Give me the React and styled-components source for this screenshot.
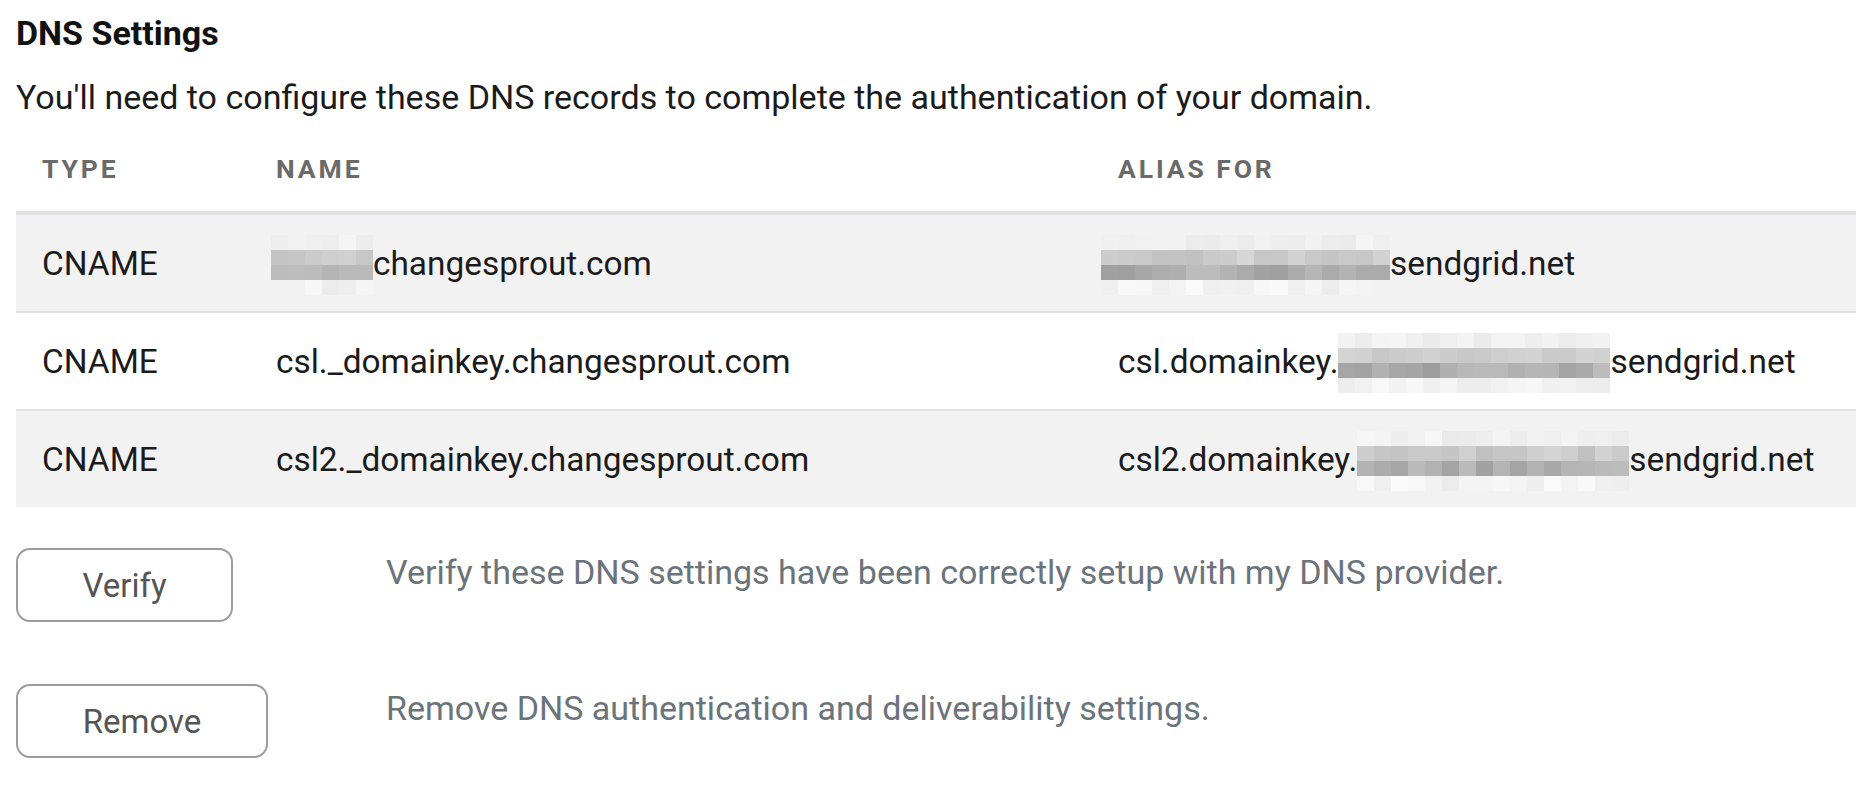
import React from "react";
import styled, { createGlobalStyle } from "styled-components";

const GlobalStyle = createGlobalStyle`
  body {
    margin: 0;
    background: #fff;
    font-family: Roboto, "Liberation Sans", sans-serif;
    color: #1b1b1b;
  }
`;

const Page = styled.div`
  padding: 13px 0 0 16px;
`;

const Title = styled.h2`
  margin: 0;
  font-size: 34px;
  font-weight: 700;
  line-height: 40px;
  color: #111;
`;

const Intro = styled.p`
  margin: 24px 0 0;
  font-size: 34px;
  line-height: 40px;
  color: #1b1b1b;
`;

const cols = `234px 842px 1fr`;

const Table = styled.div`
  margin-top: 0;
`;

const HeadRow = styled.div`
  display: grid;
  grid-template-columns: ${cols};
  align-items: center;
  height: 98px;
  padding-top: 8px;
  box-sizing: border-box;
  border-bottom: 4px solid #dfe0e4;
`;

const HeadCell = styled.div`
  padding-left: 26px;
  font-size: 26.5px;
  font-weight: 700;
  letter-spacing: 2.9px;
  color: #6a6a6a;
  text-transform: uppercase;
`;

const Row = styled.div`
  display: grid;
  grid-template-columns: ${cols};
  align-items: center;
  height: 96px;
  background: ${(p) => (p.$shaded ? "#f2f2f2" : "#fff")};
  & + & {
    border-top: 2px solid #e1e2e4;
  }
`;

const Cell = styled.div`
  padding-left: 26px;
  font-size: 33.4px;
  white-space: nowrap;
  display: flex;
  align-items: center;
`;

const Mosaic = styled.span`
  display: inline-grid;
  grid-auto-flow: column;
  grid-template-rows: repeat(4, 15px);
  margin-top: 4px;
  margin-left: ${(p) => p.$shift || 0}px;
`;

const Tile = styled.span`
  width: 17px;
`;

const Actions = styled.div`
  margin-top: 41px;
  display: flex;
  flex-direction: column;
  gap: 62px;
`;

const ActionRow = styled.div`
  display: grid;
  grid-template-columns: 370px 1fr;
  align-items: start;
`;

const Button = styled.button`
  width: ${(p) => p.$width}px;
  height: 74px;
  border: 2px solid #9c9c9c;
  border-radius: 14px;
  background: #fff;
  font-family: inherit;
  font-size: 33px;
  color: #555;
  cursor: pointer;
`;

const Desc = styled.div`
  padding-top: 4px;
  font-size: 34px;
  line-height: 40px;
  color: #6b737b;
`;

const bands = [
  [234, 246],
  [192, 214],
  [156, 190],
  [236, 250],
];

// pixelated blur over the hidden parts of the records
const Redacted = ({ cells, seed = 1, shift }) => {
  let s = seed;
  const rnd = () => {
    s = (s * 9301 + 49297) % 233280;
    return s / 233280;
  };
  const tiles = [];
  for (let c = 0; c < cells; c++) {
    for (let r = 0; r < 4; r++) {
      const [lo, hi] = bands[r];
      const g = Math.round(lo + (hi - lo) * rnd());
      tiles.push(<Tile key={c + "-" + r} style={{ background: `rgb(${g},${g},${g})` }} />);
    }
  }
  return <Mosaic $shift={shift}>{tiles}</Mosaic>;
};

const records = [
  {
    type: "CNAME",
    name: [<Redacted key="r" cells={6} seed={3} shift={-5} />, "changesprout.com"],
    alias: [<Redacted key="r" cells={17} seed={7} shift={-17} />, "sendgrid.net"],
  },
  {
    type: "CNAME",
    name: ["csl._domainkey.changesprout.com"],
    alias: ["csl.domainkey.", <Redacted key="r" cells={16} seed={11} />, "sendgrid.net"],
  },
  {
    type: "CNAME",
    name: ["csl2._domainkey.changesprout.com"],
    alias: ["csl2.domainkey.", <Redacted key="r" cells={16} seed={19} />, "sendgrid.net"],
  },
];

export default function App() {
  return (
    <Page>
      <GlobalStyle />
      <Title>DNS Settings</Title>
      <Intro>You'll need to configure these DNS records to complete the authentication of your domain.</Intro>
      <Table>
        <HeadRow>
          <HeadCell>Type</HeadCell>
          <HeadCell>Name</HeadCell>
          <HeadCell>Alias For</HeadCell>
        </HeadRow>
        {records.map((r, i) => (
          <Row key={i} $shaded={i % 2 === 0}>
            <Cell>{r.type}</Cell>
            <Cell>{r.name}</Cell>
            <Cell>{r.alias}</Cell>
          </Row>
        ))}
      </Table>
      <Actions>
        <ActionRow>
          <Button $width={217}>Verify</Button>
          <Desc>Verify these DNS settings have been correctly setup with my DNS provider.</Desc>
        </ActionRow>
        <ActionRow>
          <Button $width={252}>Remove</Button>
          <Desc>Remove DNS authentication and deliverability settings.</Desc>
        </ActionRow>
      </Actions>
    </Page>
  );
}
